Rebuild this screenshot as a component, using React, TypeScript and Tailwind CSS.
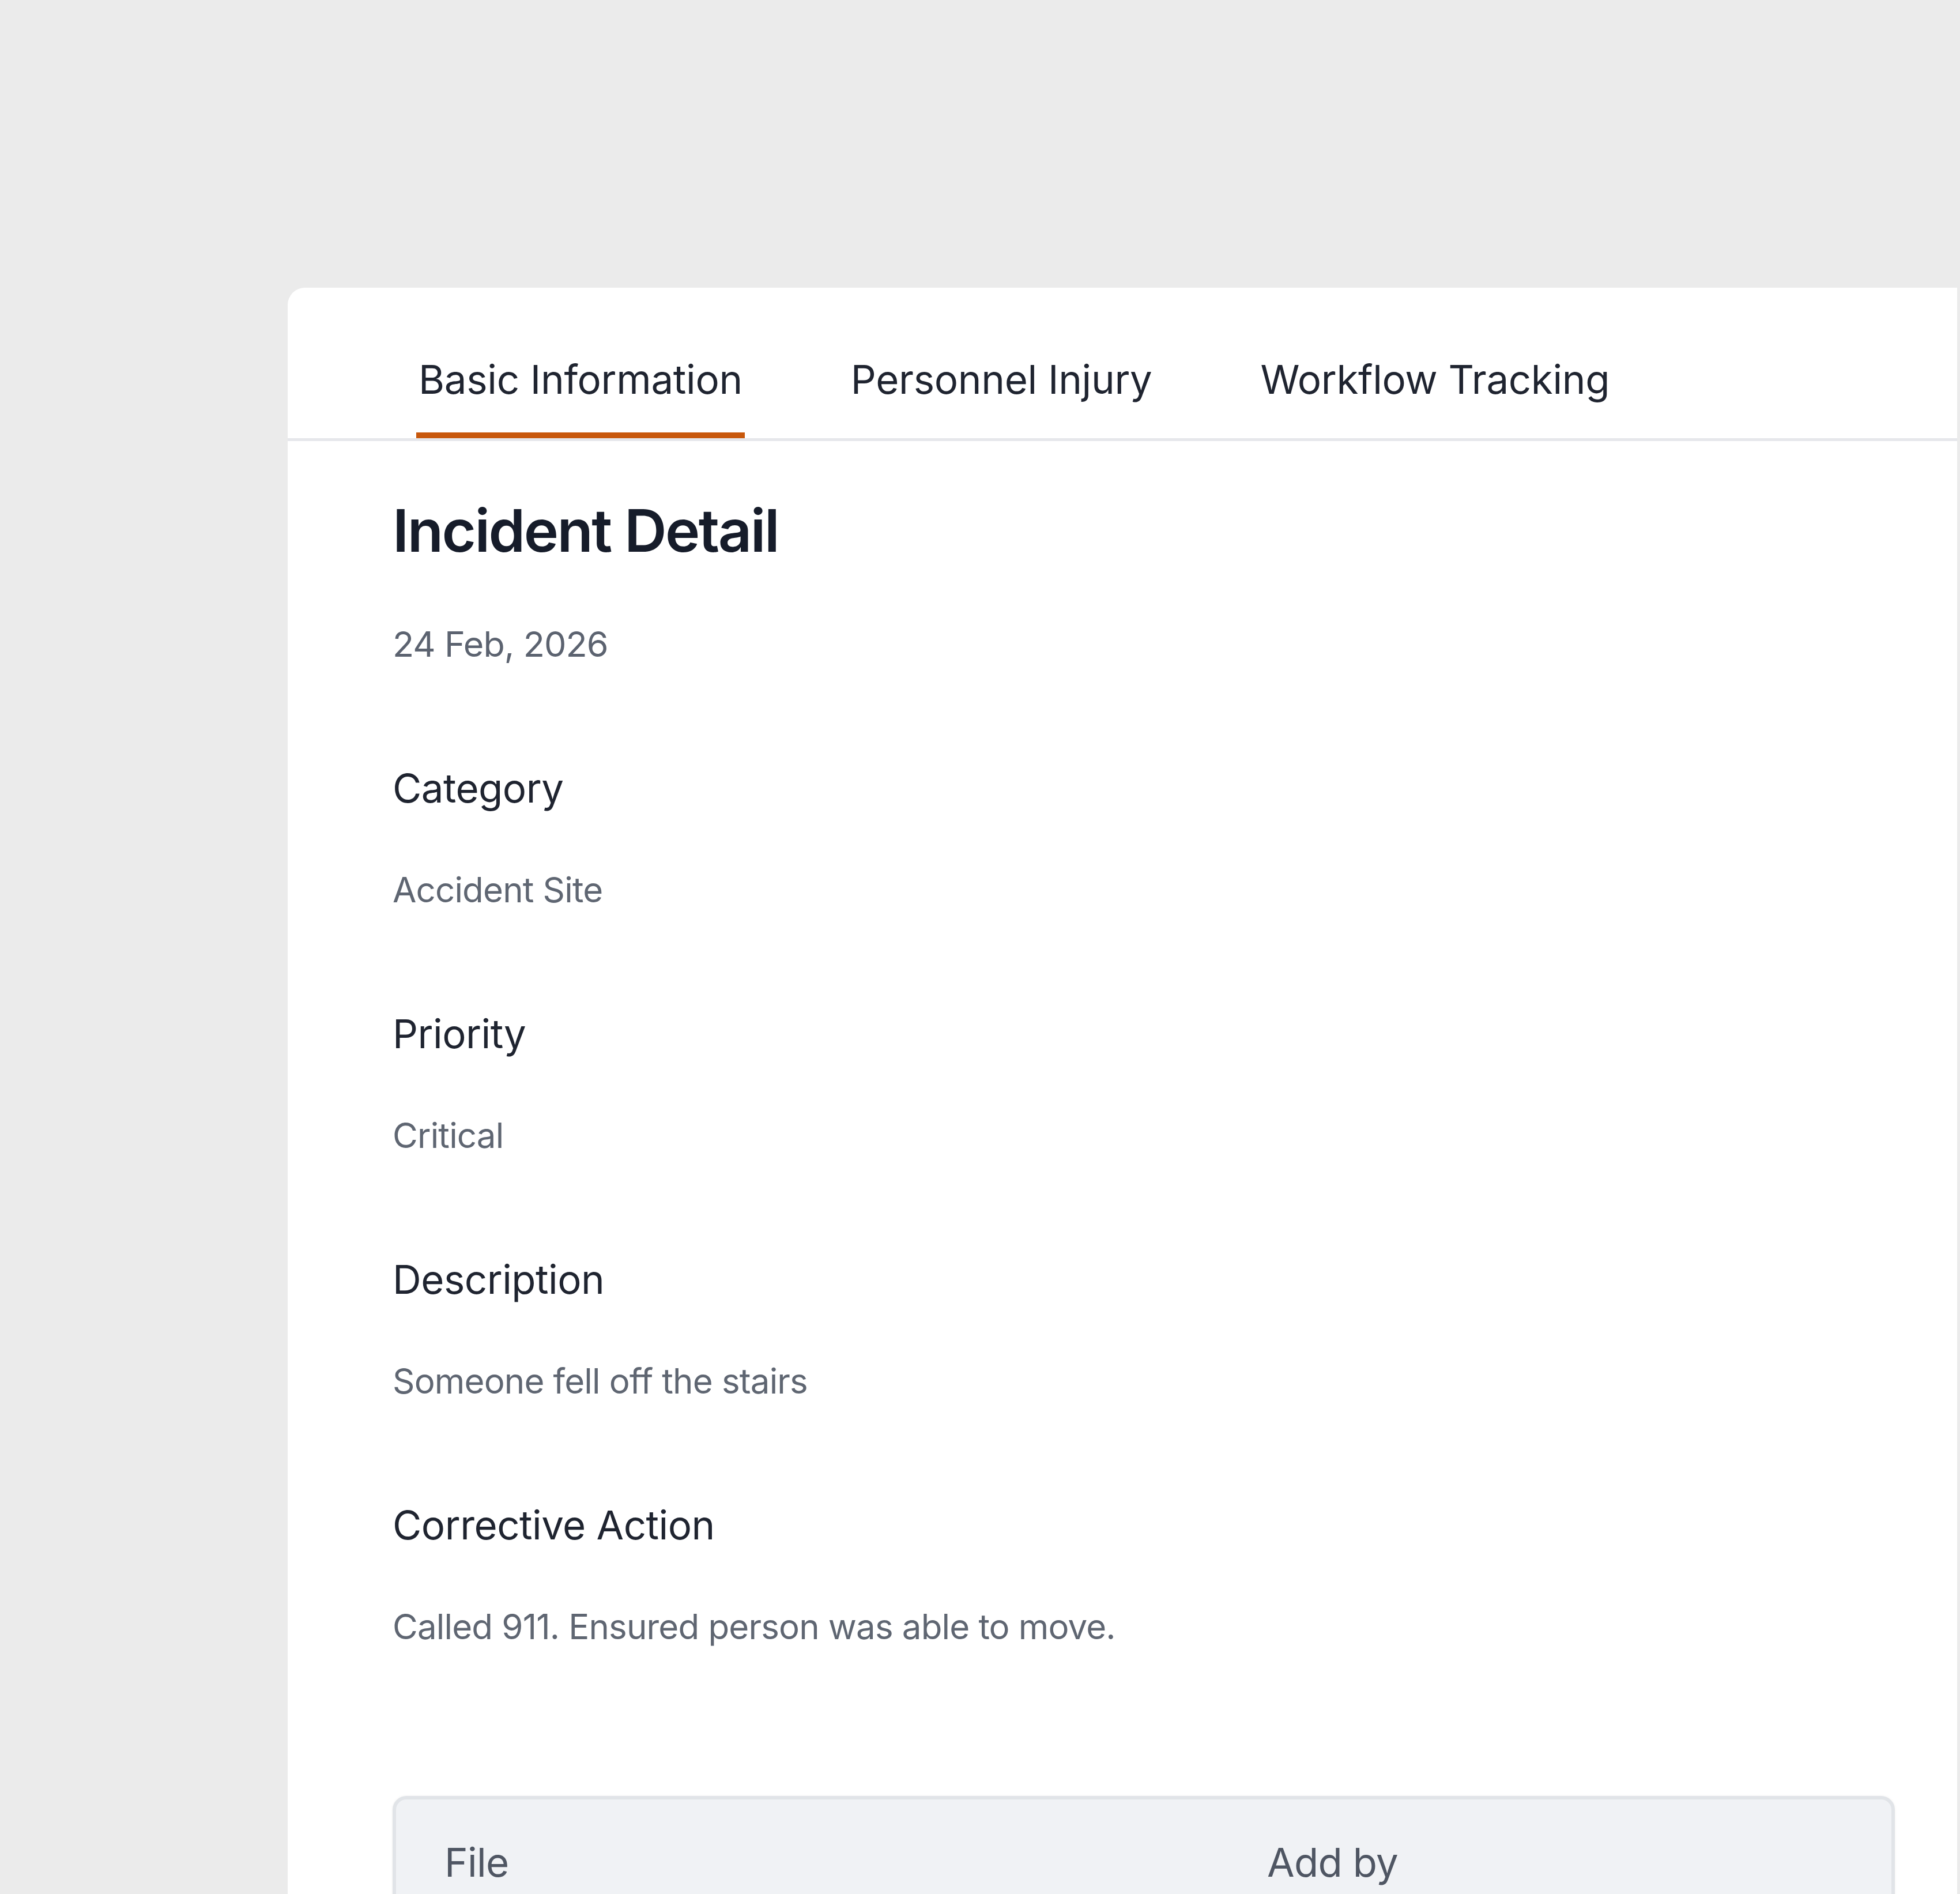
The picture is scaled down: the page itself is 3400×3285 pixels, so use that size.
const tabs = ["Basic Information", "Personnel Injury", "Workflow Tracking"];

const fields = [
  { label: "Category", value: "Accident Site" },
  { label: "Priority", value: "Critical" },
  { label: "Description", value: "Someone fell off the stairs" },
  { label: "Corrective Action", value: "Called 911. Ensured person was able to move." },
];

export default function App() {
  return (
    <div
      className="h-[3285px] overflow-hidden bg-[#ebebeb] pt-[499px] pl-[499px] pr-[5px] flex"
      style={{ fontFamily: "Inter, 'Noto Sans', sans-serif" }}
    >
      <div className="flex-1 bg-white rounded-tl-[30px] flex flex-col">
        {/* tabs */}
        <div className="flex gap-[180px] pl-[223px] border-b-[5px] border-[#e6e7eb]">
          {tabs.map((t, i) => (
            <button
              key={t}
              className={`px-[4px] pt-[109px] pb-[42px] text-[69px] leading-[100px] tracking-[-0.005em] text-[#1f2430] border-b-[10px] ${
                i === 0 ? "border-[#c8580c]" : "border-transparent"
              }`}
            >
              {t}
            </button>
          ))}
        </div>

        <div className="pl-[182px] pr-[108px]">
          <h1 className="mt-[93px] text-[102px] leading-[124px] font-semibold tracking-[-0.025em] text-[#161c2a]">
            Incident Detail
          </h1>
          <p className="mt-[90px] text-[61px] leading-[90px] tracking-[-0.015em] text-[#5c6370]">24 Feb, 2026</p>

          {fields.map((f) => (
            <div key={f.label} className="mt-[155px]">
              <div className="text-[69px] leading-[100px] tracking-[-0.008em] text-[#1f2430]">{f.label}</div>
              <div className="mt-[81px] text-[60px] leading-[90px] tracking-[-0.014em] text-[#5f6672]">{f.value}</div>
            </div>
          ))}

          <div className="mt-[249px] border-[6px] border-[#e1e4e8] rounded-[24px] bg-[#f0f2f5] shadow-[0_0_4px_rgba(0,0,0,0.06)]">
            <div className="grid grid-cols-[1427px_1fr] pt-[59px] text-[69px] leading-[100px] tracking-[-0.01em] text-[#4f5663]">
              <div className="pl-[84px]">File</div>
              <div className="pl-[84px]">Add by</div>
            </div>
            <div className="h-[200px]" />
          </div>
        </div>
      </div>
    </div>
  );
}
